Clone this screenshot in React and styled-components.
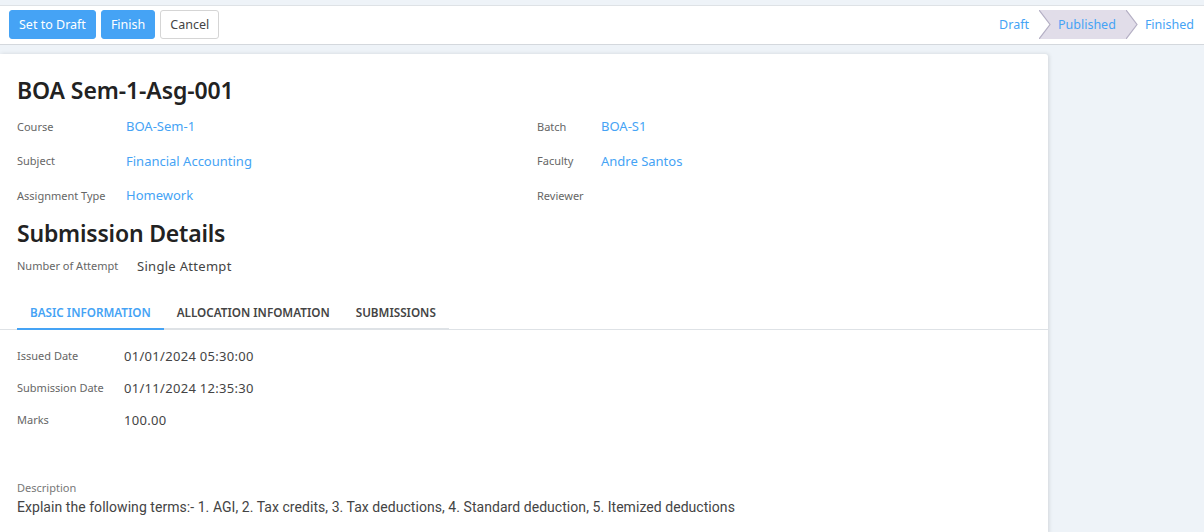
import React from 'react'
import styled, {createGlobalStyle} from 'styled-components'

const GlobalStyle = createGlobalStyle`
  body {
    margin: 0;
    background: #eef3f8;
    font-family: 'Noto Sans', 'Liberation Sans', sans-serif;
    color: #333;
  }
`

const Page = styled.div`
  width: 1204px;
  height: 532px;
  overflow: hidden;
  background: #eef3f8;
`

const ControlBar = styled.div`
  margin-top: 5px;
  height: 38px;
  background: #fff;
  border-top: 1px solid #dee2e6;
  border-bottom: 1px solid #d4d8dd;
  display: flex;
  align-items: center;
  justify-content: space-between;
  padding: 0 9px;
`

const ButtonGroup = styled.div`
  display: flex;
  gap: 5px;
  margin-top: -1px;
`

const Button = styled.button`
  height: 29px;
  padding: 0 9px;
  font-family: inherit;
  font-size: 12.5px;
  border-radius: 3px;
  cursor: pointer;
  border: 1px solid ${p => (p.primary ? '#45a3f5' : '#d5d5d5')};
  background: ${p => (p.primary ? '#45a3f5' : '#fff')};
  color: ${p => (p.primary ? '#fff' : '#444')};
`

const StatusBar = styled.div`
  display: flex;
  align-items: stretch;
  height: 29px;
  margin: -2px -9px 0 0;
`

const Step = styled.div`
  display: flex;
  align-items: center;
  padding: 0 10px 0 ${p => (p.first ? '0' : '7px')};
  font-size: 12.5px;
  color: #45a3f5;
  background: ${p => (p.current ? '#e1dde9' : 'transparent')};
`

const Chevron = styled.svg`
  display: block;
  flex: none;
`

const Sheet = styled.div`
  width: 1048px;
  margin-top: 9px;
  background: #fff;
  border-top-right-radius: 3px;
  box-shadow: 1px 0 4px rgba(0, 0, 0, 0.12);
  min-height: 480px;
`

const Head = styled.div`
  padding: 19px 17px 0;
`

const Title = styled.h1`
  margin: 0 0 2px;
  font-size: 23px;
  font-weight: 600;
  letter-spacing: -0.1px;
  color: #222;
  line-height: 34px;
`

const FieldGrid = styled.div`
  display: grid;
  grid-template-columns: 520px 1fr;
`

const Field = styled.div`
  display: flex;
  align-items: center;
  height: ${p => p.h || '34.5px'};
`

const Label = styled.div`
  width: ${p => p.w || '109px'};
  flex: none;
  font-size: 11px;
  color: #666;
`

const Link = styled.div`
  font-size: 13px;
  color: #45a3f5;
`

const Value = styled.div`
  font-size: 13px;
  letter-spacing: 0.3px;
  color: #444;
`

const SubTitle = styled.h2`
  margin: 3px 0 0;
  font-size: 23px;
  font-weight: 600;
  letter-spacing: -0.2px;
  color: #222;
  line-height: 34px;
`

const Tabs = styled.div`
  margin-top: 16px;
  border-bottom: 1px solid #dee2e6;
  padding: 0 17px;
  display: flex;
`

const Tab = styled.div`
  padding: 6px 13px 8px;
  font-size: 11.7px;
  font-weight: 600;
  text-transform: uppercase;
  color: ${p => (p.active ? '#45a3f5' : '#444')};
  border-bottom: 2px solid ${p => (p.active ? '#45a3f5' : '#dee2e6')};
  margin-bottom: -1px;
`

const TabBody = styled.div`
  padding: 10px 17px 0;
`

const Description = styled.div`
  margin-top: 44px;
`

const DescLabel = styled.div`
  font-size: 11px;
  color: #777;
  margin-bottom: 4px;
`

const DescText = styled.div`
  font-family: 'Roboto', sans-serif;
  font-size: 14px;
  letter-spacing: 0.05px;
  color: #444;
`

const Arrow = () => (
  <Chevron width="12" height="29" viewBox="0 0 12 29">
    <polygon points="0,0 12,0 12,29 0,29 11,14.5" fill="#e1dde9" />
    <polyline points="0,0 11,14.5 0,29" fill="none" stroke="#b4afc4" strokeWidth="1.2" />
  </Chevron>
)

const ArrowFilled = () => (
  <Chevron width="12" height="29" viewBox="0 0 12 29">
    <polygon points="0,0 11,14.5 0,29" fill="#e1dde9" />
    <polyline points="0,0 11,14.5 0,29" fill="none" stroke="#b4afc4" strokeWidth="1.2" />
  </Chevron>
)

const App = () => {
  return (
    <Page>
      <GlobalStyle />
      <ControlBar>
        <ButtonGroup>
          <Button primary>Set to Draft</Button>
          <Button primary>Finish</Button>
          <Button>Cancel</Button>
        </ButtonGroup>
        <StatusBar>
          <Step first>Draft</Step>
          <Arrow />
          <Step current>Published</Step>
          <ArrowFilled />
          <Step>Finished</Step>
        </StatusBar>
      </ControlBar>
      <Sheet>
        <Head>
          <Title>BOA Sem-1-Asg-001</Title>
          <FieldGrid>
            <Field><Label>Course</Label><Link>BOA-Sem-1</Link></Field>
            <Field><Label w="64px">Batch</Label><Link>BOA-S1</Link></Field>
            <Field><Label>Subject</Label><Link>Financial Accounting</Link></Field>
            <Field><Label w="64px">Faculty</Label><Link>Andre Santos</Link></Field>
            <Field><Label>Assignment Type</Label><Link>Homework</Link></Field>
            <Field><Label w="64px">Reviewer</Label></Field>
          </FieldGrid>
          <SubTitle>Submission Details</SubTitle>
          <Field h="32px"><Label w="120px">Number of Attempt</Label><Value>Single Attempt</Value></Field>
        </Head>
        <Tabs>
          <Tab active>Basic Information</Tab>
          <Tab>Allocation Infomation</Tab>
          <Tab>Submissions</Tab>
        </Tabs>
        <TabBody>
          <Field h="32px"><Label w="107px">Issued Date</Label><Value>01/01/2024 05:30:00</Value></Field>
          <Field h="32px"><Label w="107px">Submission Date</Label><Value>01/11/2024 12:35:30</Value></Field>
          <Field h="32px"><Label w="107px">Marks</Label><Value>100.00</Value></Field>
          <Description>
            <DescLabel>Description</DescLabel>
            <DescText>Explain the following terms:- 1. AGI, 2. Tax credits, 3. Tax deductions, 4. Standard deduction, 5. Itemized deductions</DescText>
          </Description>
        </TabBody>
      </Sheet>
    </Page>
  )
}

export default App
